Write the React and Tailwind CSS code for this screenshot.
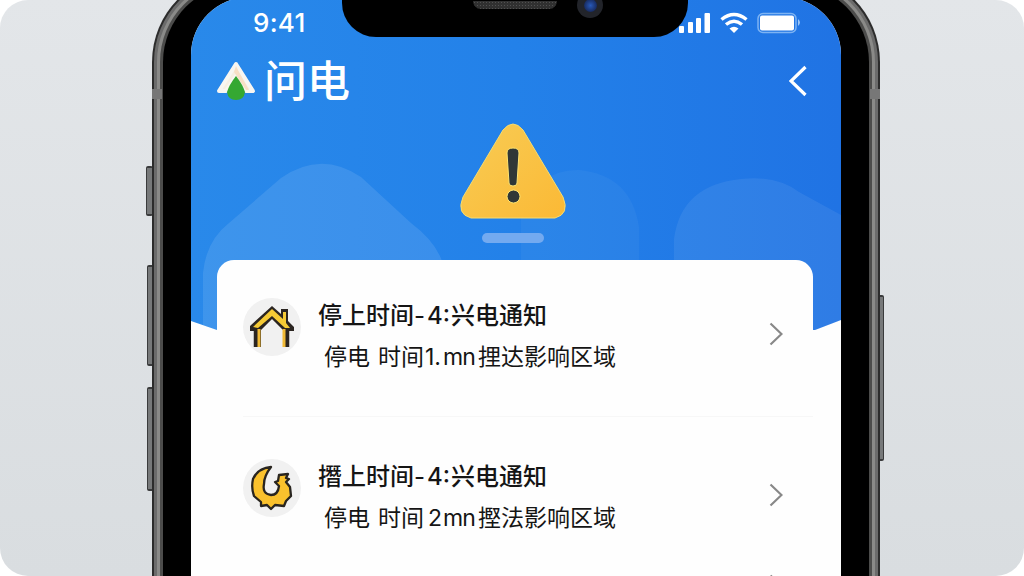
const ALERTS = [
    {
        id: 1,
        icon: HouseIcon,
        title: ['停上时间', '-', '4:', '兴电通知'],
        time: '1.',
        area: '捚达影响区域',
        timeClass: 'pl-px',
    },
    {
        id: 2,
        icon: RoosterIcon,
        title: ['撍上时间', '-', '4:', '兴电通知'],
        time: '2',
        area: '摼法影响区域',
        timeClass: 'pl-[4px]',
    },
];

export default function App() {
    return (
        <div className="h-[576px] w-[1024px] overflow-hidden bg-white font-['Inter','Noto_Sans_CJK_SC',sans-serif]">
            <div className="relative h-full overflow-hidden rounded-[28px] bg-linear-to-b from-[#e3e6e9] to-[#d9dde0]">
                <SideButton className="left-[146px] top-[166px] h-[50px]" />
                <SideButton className="left-[147px] top-[265px] h-[101px]" />
                <SideButton className="left-[147px] top-[387px] h-[104px]" />
                <SideButton className="left-[877px] top-[295px] h-[166px]" />
                <Phone>
                    <Hero />
                    <AlertList />
                </Phone>
            </div>
        </div>
    );
}

function SideButton({ className }) {
    return <span className={`absolute w-[7px] rounded-xs border border-y-2 border-[#3a3b3c] bg-[#77797a] ${className}`} />;
}

function Phone({ children }) {
    return (
        <div className="relative -mt-[27px] ml-[152px] h-[760px] w-[728px] rounded-[89px] bg-[#2c2c2c] p-[2px]">
            <div className="h-full rounded-[87px] bg-[#6b6b6b] p-[3px]">
                <div className="h-full rounded-[84px] bg-[#8a8a88] p-[3px]">
                    <div className="h-full rounded-[81px] bg-[#4c4c4b] p-[3px]">
                        <div className="h-full rounded-[78px] bg-black px-[28px] pt-[13px]">
                            <div className="relative h-full overflow-hidden rounded-t-[58px] bg-[#fefefe]">{children}</div>
                        </div>
                    </div>
                </div>
            </div>
            <span className="absolute left-0 top-[116px] h-[10px] w-[10px] bg-[#777]" />
            <span className="absolute right-0 top-[116px] h-[10px] w-[10px] bg-[#777]" />
        </div>
    );
}

function Hero() {
    return (
        <header className="relative h-[335px] bg-linear-to-r from-[#2989ea] via-[#2381e9] to-[#2073e4] [clip-path:polygon(0_0,100%_0,100%_323px,96%_333px,4%_333px,0_324px)]">
            <svg className="absolute inset-0" width="650" height="335" viewBox="0 0 650 335">
                <path d="M12 335V276Q15 244 38 226L90 181Q130 153 170 180L220 226Q244 244 251 264V335Z" fill="#fff" fillOpacity=".1" />
                <path d="M330 264V220Q345 172 388 173Q440 178 448 230V264Z" fill="#fff" fillOpacity=".04" />
                <path d="M483 264V242Q490 188 550 182Q585 178 608 195L650 218V335H483Z" fill="#fff" fillOpacity=".07" />
            </svg>
            <Notch />
            <div className="relative flex h-[52px] items-center justify-between pl-[62px] pr-[39px]">
                <span className="-mt-px text-[26px] font-medium leading-none tracking-[0.3px] text-white">9:41</span>
                <StatusIcons />
            </div>
            <div className="relative flex h-[64px] items-center justify-between pl-[25px] pr-[34px]">
                <div className="flex items-center gap-[8px]">
                    <BrandMark />
                    <h1 className="text-[43px] font-medium leading-none text-white">问电</h1>
                </div>
                <svg width="18" height="32" viewBox="0 0 18 32" fill="none" stroke="#fff" strokeWidth="3.200">
                    <path d="M16.500 2 2 16l14.500 14" />
                </svg>
            </div>
            <div className="relative flex flex-col items-center pt-[10px] pr-[6px]">
                <WarningIcon />
                <span className="mt-[14px] h-[10px] w-[62px] rounded-full bg-[#73aaf0]" />
            </div>
        </header>
    );
}

function Notch() {
    return (
        <div className="absolute left-[151px] top-0 flex h-[40px] w-[346px] justify-end rounded-b-[34px] bg-black">
            <span className="mr-[20px] mt-[4px] h-[8px] w-[84px] rounded-b-full bg-[#303030] bg-[radial-gradient(#505050_1px,transparent_1px)] bg-[length:3px_3px]" />
            <span className="mr-[85px] mt-[-5px] flex size-[26px] items-center justify-center rounded-full bg-[#22242a]">
                <span className="size-[13px] rounded-full bg-radial from-[#2859b8] to-[#101a40]" />
            </span>
        </div>
    );
}

function StatusIcons() {
    return (
        <svg className="mt-[2px]" width="123" height="24" viewBox="0 0 123 24" fill="#fff">
            <rect x="0" y="14" width="5" height="7" rx="1" />
            <rect x="9" y="10" width="5" height="11" rx="1" />
            <rect x="17" y="6" width="5" height="15" rx="1" />
            <rect x="25.500" y="1" width="5.500" height="20" rx="1" />
            <g fill="none" stroke="#fff" strokeWidth="3.500">
                <path d="M42.500 7.500q12.500-10 25 0" />
                <path d="M47 12.500q8-6.500 16 0" />
            </g>
            <path d="M50.500 16.500q4.500-3.500 9 0L55 21Z" />
            <rect x="79" y="1.500" width="38" height="19" rx="5" fill="none" stroke="#7db3f3" strokeWidth="1.500" />
            <rect x="81" y="3.500" width="34" height="15" rx="2" />
            <path d="M119 7q4 3.500 0 7Z" fill="#9cc5f6" />
        </svg>
    );
}

function BrandMark() {
    return (
        <svg width="40" height="40" viewBox="0 0 40 40">
            <path d="M3 30 20 3l17 27h-7L20 15 10 30Z" fill="#f7efe2" stroke="#f8f6f1" strokeWidth="4" strokeLinejoin="round" />
            <path d="m20 5 3 6 10 18h-3L18 11Z" fill="#f8dfc5" />
            <path d="M20 15q7 9 9 16-1 8-9 8t-9-8q2-7 9-16Z" fill="#35a832" />
        </svg>
    );
}

function WarningIcon() {
    return (
        <svg width="106" height="96" viewBox="0 0 106 96">
            <defs>
                <linearGradient id="warning" x1="0" y1="0" x2="1" y2="1">
                    <stop stopColor="#f8cc55" />
                    <stop offset="1" stopColor="#fbb935" />
                </linearGradient>
            </defs>
            <path d="M43 7Q53-5 63 7L103 74Q110 91 95 95H11Q-4 91 3 74Z" fill="url(#warning)" stroke="#f6dc70" />
            <path d="M47 30q0-5 6-5t6 5l-2 30q0 3-4 3t-4-3Z" fill="#303737" stroke="#ffe470" />
            <circle cx="53.500" cy="73.500" r="6.500" fill="#303737" stroke="#ffe470" />
        </svg>
    );
}

function AlertList() {
    return (
        <main className="relative -mt-[72px] ml-[26px] mr-[28px] h-[340px] rounded-t-[17px] bg-[#fefefe] pl-[26px] pt-[25px]">
            <div className="divide-y divide-[#f7f7f7]">
                {ALERTS.map((alert) => (
                    <AlertRow key={alert.id} {...alert} />
                ))}
            </div>
            <div className="-mt-[3px] flex justify-end pr-[30px]">
                <Chevron />
            </div>
        </main>
    );
}

function AlertRow({ icon: Icon, title, time, timeClass, area }) {
    const [subject, dash, hour, notice] = title;

    return (
        <section className="pb-[30px] not-first:pt-[29px]">
            <div className="flex h-[101px] justify-between pr-[30px]">
                <div className="flex">
                    <span className="mt-[13px] flex size-[58px] items-center justify-center rounded-full bg-[#f1f1f1]">
                        <Icon />
                    </span>
                    <div className="ml-[17px] pt-[11px] text-[#151515]">
                        <h2 className="flex h-[40px] items-center whitespace-nowrap text-[24px] font-medium leading-none">
                            <span>{subject}</span>
                            <span className="w-[13px] font-normal">{dash}</span>
                            <span className="w-[24px]">{hour}</span>
                            <span>{notice}</span>
                        </h2>
                        <p className="ml-[6px] flex h-[42px] items-center whitespace-nowrap text-[23px] leading-none">
                            <span className="mr-[8px]">停电</span>
                            <span>时间</span>
                            <span className={`w-[19px] ${timeClass}`}>{time}</span>
                            <span className="w-[35px] tracking-[-0.8px]">mn</span>
                            <span>{area}</span>
                        </p>
                    </div>
                </div>
                <div className="pt-[37px]">
                    <Chevron />
                </div>
            </div>
        </section>
    );
}

function Chevron() {
    return (
        <svg width="14" height="24" viewBox="0 0 14 24" fill="none" stroke="#888" strokeWidth="2.200">
            <path d="m1.500 1.500 11 10.500-11 10.500" />
        </svg>
    );
}

function HouseIcon() {
    return (
        <svg className="shrink-0" width="46" height="42" viewBox="0 0 46 42">
            <path d="M1 20 23 0l9 8V3h7v12l6 6v4h-5v16h-6V24L23 13 12 24v17H6V25H1Z" fill="#2b2521" />
            <path d="M4 21 23 3l11 10V6h3v11l4 5h-5L23 10 9 22Z" fill="#f5ca35" />
            <path d="M10 23v18M35 23v18" stroke="#f1ba35" strokeWidth="3" />
            <path d="M6 23v18M39 23v18" stroke="#2b2521" strokeWidth="2.500" />
        </svg>
    );
}

function RoosterIcon() {
    return (
        <svg width="42" height="46" viewBox="0 0 42 46">
            <path d="M20 2Q7 3 2 14 0 23 3 31l7 6v4l6-1 4 4 4-4 9 1 2-5 5-5-1-9-4-5 3-3-3-1 2-4-9 1-1 6-3 1 4 4q-1 9-8 9-9-1-7-11 0-8 7-17Z" fill="#fac12d" stroke="#29251f" strokeWidth="2.300" strokeLinejoin="round" />
        </svg>
    );
}
